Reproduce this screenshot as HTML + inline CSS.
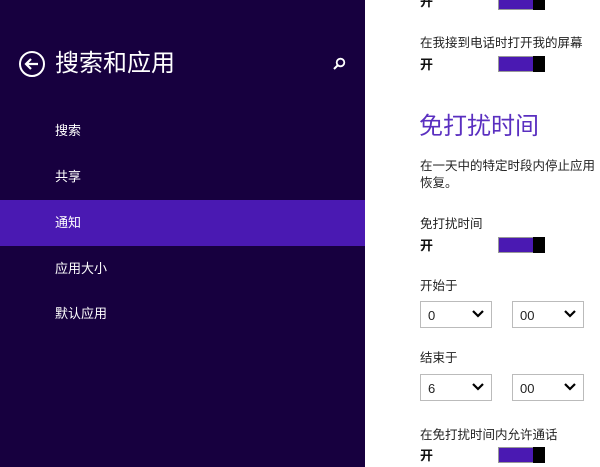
<!DOCTYPE html>
<html><head><meta charset="utf-8"><style>
body{margin:0;width:600px;height:467px;overflow:hidden;position:relative;font-family:"Liberation Sans","Microsoft YaHei","Noto Sans CJK SC",sans-serif;background:#fff}
.l{position:absolute;left:0;top:0;width:365px;height:467px;background:#17003f}
.sel{position:absolute;left:0;top:200px;width:365px;height:46px;background:#4a19b2}
.t{position:absolute;white-space:nowrap;line-height:1}
.w{color:#fff;font-size:13px;left:55px}
.d{color:#222;font-size:12.5px;left:420px}
.b{color:#111;font-size:13px;font-weight:bold;left:420px}
.tg{position:absolute;left:498px;width:45px;height:14px;border:1px solid #999;background:#4a19b2}
.tg:after{content:"";position:absolute;right:-1px;top:-1px;width:12px;height:16px;background:#000}
.dd{position:absolute;width:70px;height:25px;border:1px solid #bbb;background:#fff;font-size:13px;color:#222}
.dd span{position:absolute;left:7px;top:6px}
.dd svg{position:absolute;right:7px;top:8px}
</style></head><body>
<div class="l"></div><div class="sel"></div>
<svg style="position:absolute;left:18px;top:50px" width="28" height="28" viewBox="0 0 28 28"><circle cx="14" cy="14" r="12" fill="none" stroke="#fff" stroke-width="2"/><path d="M20 14H8M13 9l-5 5 5 5" fill="none" stroke="#fff" stroke-width="2.2"/></svg>
<div class="t" style="left:55px;top:52px;color:#fff;font-size:24px">搜索和应用</div>
<svg style="position:absolute;left:332px;top:57px" width="14" height="14" viewBox="0 0 14 14"><circle cx="8.5" cy="5.5" r="3.8" fill="none" stroke="#fff" stroke-width="1.8"/><path d="M6 8L2 12" stroke="#fff" stroke-width="2"/></svg>
<div class="t w" style="top:124px">搜索</div>
<div class="t w" style="top:170px">共享</div>
<div class="t w" style="top:216px">通知</div>
<div class="t w" style="top:262px">应用大小</div>
<div class="t w" style="top:307px">默认应用</div>
<div class="tg" style="top:-6px"></div><div class="t b" style="top:-5px">开</div>
<div class="t d" style="top:37px">在我接到电话时打开我的屏幕</div>
<div class="tg" style="top:56px"></div><div class="t b" style="top:58px">开</div>
<div class="t" style="left:419px;top:115px;font-size:24px;color:#5a2fc0">免打扰时间</div>
<div class="t d" style="top:160px">在一天中的特定时段内停止应用</div>
<div class="t d" style="top:177px">恢复。</div>
<div class="t d" style="top:218px">免打扰时间</div>
<div class="tg" style="top:237px"></div><div class="t b" style="top:239px">开</div>
<div class="t d" style="top:280px">开始于</div>
<div class="dd" style="left:420px;top:301px"><span>0</span><svg width="12" height="8"><path d="M1 1l5 5 5-5" fill="none" stroke="#000" stroke-width="2.2"/></svg></div>
<div class="dd" style="left:512px;top:301px"><span>00</span><svg width="12" height="8"><path d="M1 1l5 5 5-5" fill="none" stroke="#000" stroke-width="2.2"/></svg></div>
<div class="t d" style="top:352px">结束于</div>
<div class="dd" style="left:420px;top:374px"><span>6</span><svg width="12" height="8"><path d="M1 1l5 5 5-5" fill="none" stroke="#000" stroke-width="2.2"/></svg></div>
<div class="dd" style="left:512px;top:374px"><span>00</span><svg width="12" height="8"><path d="M1 1l5 5 5-5" fill="none" stroke="#000" stroke-width="2.2"/></svg></div>
<div class="t d" style="top:429px">在免打扰时间内允许通话</div>
<div class="tg" style="top:447px"></div><div class="t b" style="top:449px">开</div>
</body></html>
